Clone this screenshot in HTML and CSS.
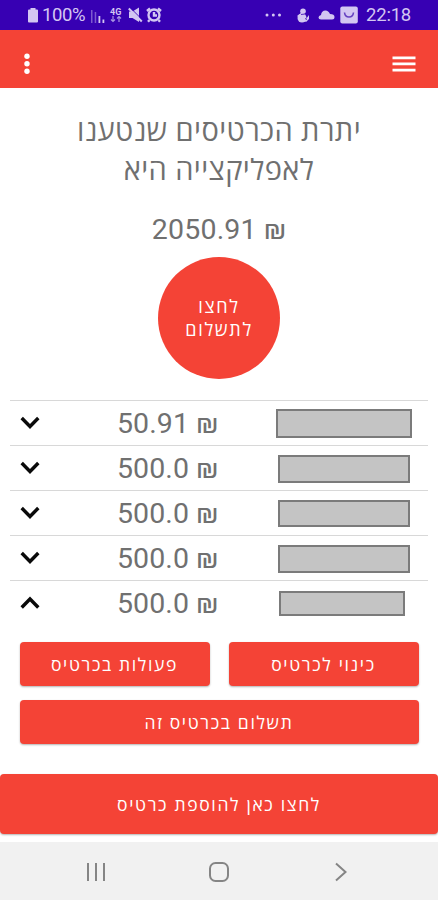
FILE: index.html
```html
<!DOCTYPE html>
<html lang="he">
<head>
<meta charset="utf-8">
<title>יתרת הכרטיסים</title>
<link rel="stylesheet" href="styles.css">
</head>
<body>
<header class="status">
  <div class="status-left">
    <svg class="battery" width="12" height="16" viewBox="0 0 12 16"><path d="M3.500 1h5v1.500H10q1 0 1 1v11q0 1-1 1H2q-1 0-1-1v-11q0-1 1-1h1.500z"/></svg>
    <span class="percent">100%</span>
    <svg class="signal" width="14" height="14" viewBox="0 0 14 14"><path opacity=".45" d="M0 0h1.500v13H0zM3.700 2h1.500v11H3.700z"/><path d="M7.500 6h1.800v7H7.500zM11.500 9.500h1.800V13h-1.800z"/></svg>
    <div class="net"><span>4G</span><svg width="12" height="7" viewBox="0 0 12 7"><path d="M3 0v5M1 3.500l2 2 2-2M9 6V1M7 2.500l2-2 2 2"/></svg></div>
    <svg class="mute" width="15" height="16" viewBox="0 0 15 16"><path d="M1 4.500h3.500L11 .5v14.500L4.500 11H1z"/><path class="cut" d="M2 .5l13 13"/><path class="slash" d="M.8 1.500l13 13"/></svg>
    <svg class="alarm" width="16" height="16" viewBox="0 0 16 16"><circle cx="8" cy="8" r="5.500"/><path d="M1 4l3-2.700M15 4l-3-2.700M3.500 13L2 14.700M12.500 13l1.500 1.700M8 5v3.500h3"/></svg>
  </div>
  <div class="status-right">
    <svg class="more" width="17" height="4" viewBox="0 0 17 4"><circle cx="2" cy="2" r="1.500"/><circle cx="8.300" cy="2" r="1.500"/><circle cx="14.500" cy="2" r="1.500"/></svg>
    <svg class="snow" width="14" height="15" viewBox="0 0 14 15"><circle cx="7" cy="3.300" r="2.800"/><circle cx="6" cy="10" r="4.500"/><path d="M1 8l4-3 4 1 1 5 3-4v4l-3 3z"/><path class="line" d="M5 6.500l4-.5M9 10.500l2 1"/></svg>
    <svg class="cloud" width="17" height="10" viewBox="0 0 17 10"><path d="M3 9.500Q.5 9.500.5 7.500T3 5q.5-4.500 4.500-4.500Q10.500.5 12 4q4.500 0 4.500 3 0 2.500-2.500 2.500z"/></svg>
    <svg class="bag" width="18" height="18" viewBox="0 0 18 18"><rect x=".3" y=".5" width="17.500" height="17" rx="2"/><path d="M4.500 6.500q.5 4.500 4.500 4.500t4.500-4.500"/></svg>
    <span class="clock">22:18</span>
  </div>
</header>
<nav class="toolbar">
  <svg width="6" height="22" viewBox="0 0 6 22"><circle cx="3" cy="3.300" r="2.700"/><circle cx="3" cy="10.800" r="2.700"/><circle cx="3" cy="18.300" r="2.700"/></svg>
  <svg width="24" height="16" viewBox="0 0 24 16"><path d="M.5.500h23v2.700H.5zM.5 6.600h23v2.700H.5zM.5 12.700h23v2.700H.5z"/></svg>
</nav>
<main>
  <h1 class="title" dir="rtl">יתרת הכרטיסים שנטענו<br>לאפליקצייה היא</h1>
  <p class="total">2050.91 ₪</p>
  <button class="pay" dir="rtl">לחצו<br>לתשלום</button>
  <ul class="cards">
    <li><svg class="chev" width="20" height="14" viewBox="0 0 20 14"><path d="M1.700 2l8.300 8.500L18.300 2"/></svg><span class="sum">50.91 ₪</span><i class="mask m1"></i></li>
    <li><svg class="chev" width="20" height="14" viewBox="0 0 20 14"><path d="M1.700 2l8.300 8.500L18.300 2"/></svg><span class="sum">500.0 ₪</span><i class="mask m2"></i></li>
    <li><svg class="chev" width="20" height="14" viewBox="0 0 20 14"><path d="M1.700 2l8.300 8.500L18.300 2"/></svg><span class="sum">500.0 ₪</span><i class="mask m3"></i></li>
    <li><svg class="chev" width="20" height="14" viewBox="0 0 20 14"><path d="M1.700 2l8.300 8.500L18.300 2"/></svg><span class="sum">500.0 ₪</span><i class="mask m4"></i></li>
    <li><svg class="chev" width="20" height="14" viewBox="0 0 20 14"><path d="M1.700 11.500L10 3l8.300 8.500"/></svg><span class="sum">500.0 ₪</span><i class="mask m5"></i></li>
  </ul>
  <div class="actions" dir="rtl">
    <button class="btn">כינוי לכרטיס</button>
    <button class="btn">פעולות בכרטיס</button>
    <button class="btn wide">תשלום בכרטיס זה</button>
  </div>
  <button class="btn add" dir="rtl">לחצו כאן להוספת כרטיס</button>
</main>
<footer class="navbar">
  <svg width="20" height="20" viewBox="0 0 20 20"><path d="M2 1v18M10 1v18M18 1v18"/></svg>
  <svg width="22" height="22" viewBox="0 0 22 22"><rect x="2" y="2" width="18" height="18" rx="5.500"/></svg>
  <svg width="14" height="20" viewBox="0 0 14 20"><path d="M2 1.500l9.500 8.500L2 18.500"/></svg>
</footer>
</body>
</html>
```
FILE: styles.css
```css
* { box-sizing: border-box; }
body {
  margin: 0;
  width: 438px;
  height: 900px;
  display: flex;
  flex-direction: column;
  overflow: hidden;
  background: #fff;
  color: #707070;
  font-family: Roboto, "Open Sans", sans-serif;
}
svg { display: block; flex: none; }
.status {
  height: 30px;
  flex: none;
  display: flex;
  justify-content: space-between;
  padding: 0 26px 0 27px;
  background: #3700b3;
  color: #d3c6f2;
  fill: #d3c6f2;
}
.status-left, .status-right { display: flex; align-items: center; }
.percent { margin-left: 3px; width: 44px; font-size: 18.5px; line-height: 30px; letter-spacing: -.4px; }
.signal { margin: 3px 0 0 5px; }
.net { margin-left: 5px; width: 13px; font-size: 9px; line-height: 8px; font-weight: 700; }
.net svg { fill: none; stroke: #a893e2; stroke-width: 1.2; }
.mute { margin-left: 5px; }
.cut { stroke: #3700b3; stroke-width: 1; }
.slash { stroke: #d3c6f2; stroke-width: 2; }
.alarm { margin-left: 3px; fill: none; stroke: #d3c6f2; stroke-width: 2.4; }
.snow { margin-left: 14px; }
.snow .line { fill: none; stroke: #3700b3; stroke-width: .8; }
.cloud { margin-left: 8px; }
.bag { margin-left: 5px; }
.bag path { fill: none; stroke: #6540c0; stroke-width: 1.6; }
.clock { margin-left: 8px; font-size: 18.5px; line-height: 30px; width: 46px; letter-spacing: -.2px; }
.toolbar {
  height: 58px;
  flex: none;
  display: flex;
  align-items: center;
  justify-content: space-between;
  padding: 9px 22px 0 24px;
  background: #f44336;
  fill: #fff;
}
main { height: 754px; flex: none; display: flex; flex-direction: column; align-items: center; }
.title {
  margin: 22px 0 0;
  font: 400 29px/39px "Open Sans", sans-serif;
  letter-spacing: .42px;
  text-align: center;
}
.total { margin: 22px 0 0; font-size: 28.5px; line-height: 40px; letter-spacing: .2px; }
button { border: 0; padding: 0; color: #fff; background: #f44336; font-family: "Open Sans", sans-serif; font-weight: 400; }
.pay { margin-top: 7px; width: 122px; height: 122px; flex: none; border-radius: 50%; font-size: 18px; line-height: 23px; letter-spacing: 1.7px; }
.cards { list-style: none; margin: 21px 0 0; padding: 0; width: 418px; }
.cards li {
  height: 45px;
  display: grid;
  grid-template-columns: 107px 151px 150px;
  align-items: center;
  border-top: 1px solid #d8d8d8;
}
.chev { margin-left: 10px; fill: none; stroke: #0a0a0a; stroke-width: 3.4; }
.sum { font-size: 28.5px; line-height: 42px; letter-spacing: .1px; white-space: nowrap; padding-top: 2px; }
.mask { justify-self: center; margin-top: 1px; background: #c4c4c4; border: 2px solid #7b7b7b; }
.m1 { width: 136px; height: 29px; margin-left: 2px; }
.m2 { width: 132px; height: 28px; margin-left: 2px; }
.m3 { width: 132px; height: 27px; margin-left: 2px; }
.m4 { width: 132px; height: 28px; margin-left: 2px; }
.m5 { width: 126px; height: 25px; margin-right: 3px; }
.actions { margin-top: 17px; width: 399px; display: grid; grid-template-columns: 190px 190px; justify-content: space-between; row-gap: 14px; }
.btn { height: 44px; border-radius: 4px; font-size: 17.5px; line-height: 44px; letter-spacing: 1.65px; box-shadow: 0 1px 2px rgba(0,0,0,.3); }
.wide { grid-column: span 2; }
.add { margin-top: 30px; width: 438px; height: 60px; flex: none; line-height: 60px; }
.navbar {
  height: 58px;
  flex: none;
  display: flex;
  justify-content: space-between;
  align-items: center;
  padding: 2px 90px 0 86px;
  background: #f1f1f1;
  fill: none;
  stroke: #858585;
  stroke-width: 2;
}
.navbar svg:nth-child(2) { margin-right: 3px; }
```
